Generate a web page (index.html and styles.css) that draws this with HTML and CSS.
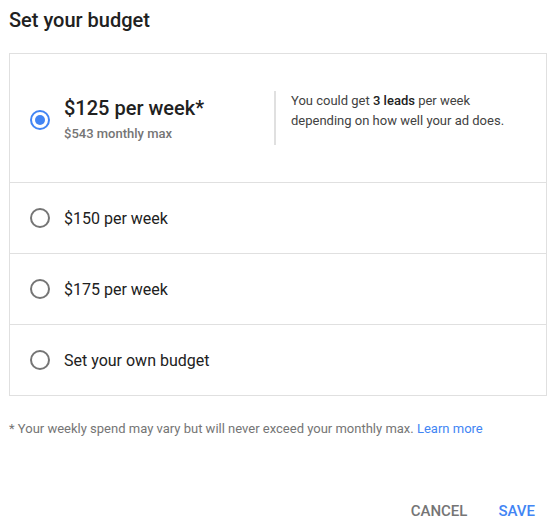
FILE: index.html
```html
<!DOCTYPE html>
<html>
<head>
<meta charset="utf-8">
<link rel="stylesheet" href="styles.css">
</head>
<body>
<div class="dialog">
  <h1 class="title">Set your budget</h1>
  <div class="card">
    <div class="row row-main">
      <span class="radio checked"></span>
      <div class="main-text">
        <div class="main-label">$125 per week*</div>
        <div class="main-sub">$543 monthly max</div>
      </div>
      <div class="info">You could get <b>3 leads</b> per week depending on how well your ad does.</div>
    </div>
    <div class="row">
      <span class="radio"></span>
      <span class="label">$150 per week</span>
    </div>
    <div class="row">
      <span class="radio"></span>
      <span class="label">$175 per week</span>
    </div>
    <div class="row">
      <span class="radio"></span>
      <span class="label">Set your own budget</span>
    </div>
  </div>
  <p class="note">* Your weekly spend may vary but will never exceed your monthly max. <a class="link" href="#">Learn more</a></p>
  <div class="actions">
    <button class="btn cancel">CANCEL</button>
    <button class="btn save">SAVE</button>
  </div>
</div>
</body>
</html>
```

FILE: styles.css
```css
html, body {
  margin: 0;
  padding: 0;
  background: #fff;
}
body {
  font-family: Roboto, "Liberation Sans", Arial, sans-serif;
  color: #212121;
}
.dialog {
  padding: 8px 5px 0 9px;
}
.title {
  margin: 0;
  font-size: 20px;
  font-weight: 500;
  line-height: 24px;
  color: #212121;
}
.card {
  margin-top: 21px;
  border: 1px solid #e0e0e0;
  width: 538px;
  box-sizing: border-box;
}
.row {
  display: flex;
  align-items: center;
  height: 71px;
  padding-left: 20px;
  border-top: 1px solid #e0e0e0;
  box-sizing: border-box;
}
.row-main {
  border-top: none;
  height: 128px;
}
.radio {
  width: 20px;
  height: 20px;
  border: 2px solid #757575;
  border-radius: 50%;
  box-sizing: border-box;
  flex: none;
  margin-right: 14px;
  position: relative;
}
.radio.checked {
  border-color: #4285f4;
  margin-top: 4px;
}
.radio.checked::after {
  content: "";
  position: absolute;
  left: 3px;
  top: 3px;
  width: 10px;
  height: 10px;
  border-radius: 50%;
  background: #4285f4;
}
.label {
  font-size: 16px;
  color: #212121;
}
.main-text {
  width: 210px;
  flex: none;
}
.main-label {
  font-size: 20px;
  font-weight: 500;
  line-height: 26px;
  color: #212121;
}
.main-sub {
  font-size: 13px;
  font-weight: 500;
  line-height: 16px;
  color: #757575;
  margin-top: 5px;
}
.info {
  border-left: 2px solid #e0e0e0;
  padding: 0 0 14px 15px;
  font-size: 13px;
  line-height: 20px;
  color: #424242;
  width: 230px;
}
.info b {
  font-weight: 500;
  color: #212121;
}
.note {
  margin: 25px 0 0 0;
  font-size: 13px;
  color: #757575;
}
.link {
  color: #4285f4;
  text-decoration: none;
}
.actions {
  display: flex;
  justify-content: flex-end;
  gap: 31px;
  margin-top: 66px;
  padding-right: 13px;
}
.btn {
  border: none;
  background: none;
  padding: 0;
  font-family: Roboto, "Liberation Sans", Arial, sans-serif;
  font-size: 15px;
  font-weight: 500;
  cursor: pointer;
}
.cancel {
  color: #757575;
}
.save {
  color: #4285f4;
}
```
